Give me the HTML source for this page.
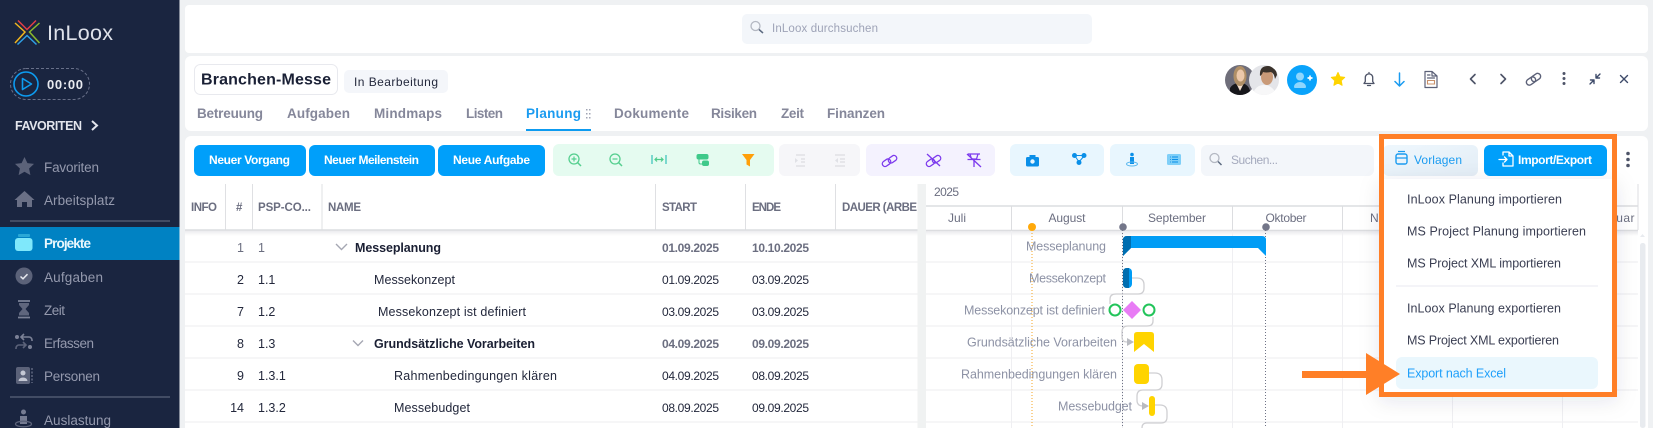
<!DOCTYPE html>
<html lang="de"><head><meta charset="utf-8"><title>InLoox Planung</title>
<style>
html,body{margin:0;padding:0;width:1653px;height:428px;overflow:hidden;background:#eff1f3}
svg{display:block;font-family:"Liberation Sans",sans-serif}
.nav{font-size:13.5px;fill:#9499ad}
.tab{font-size:13.5px;font-weight:700;fill:#85879a}
.btn{font-size:12px;font-weight:700;fill:#fff}
.th{font-size:11.5px;font-weight:700;fill:#6b6e80}
.td{font-size:12.5px;fill:#23283c}
.b{font-size:12.5px;font-weight:700;fill:#1a1f33}
.d{font-size:12px;fill:#23283c}
.db{font-size:12px;font-weight:700;fill:#6b6e80}
.mo{font-size:12px;fill:#6b6e80}
.gl{font-size:12.5px;fill:#8d92a5}
.mi{font-size:12.5px;fill:#3a3e52}
.ln{stroke:#efeff2;stroke-width:1}
.hd{stroke:#dcdde0;stroke-width:1.4}
.c{fill:none;stroke:#cfcfd2;stroke-width:1.3}
.ic{fill:none;stroke-linecap:round;stroke-linejoin:round}
</style></head><body>
<svg width="1653" height="428" viewBox="0 0 1653 428" xmlns="http://www.w3.org/2000/svg">
<defs>
<clipPath id="av1"><circle cx="1240" cy="80" r="15"/></clipPath>
<clipPath id="av2"><circle cx="1264" cy="80" r="15"/></clipPath>
<linearGradient id="hs" x1="0" y1="0" x2="0" y2="1"><stop offset="0" stop-color="#e9e9ec"/><stop offset="1" stop-color="#fff"/></linearGradient>
<linearGradient id="vg" x1="0" y1="0" x2="1" y2="1"><stop offset="0" stop-color="#eef7fd"/><stop offset="1" stop-color="#e3edf6"/></linearGradient>
<filter id="sh" x="-20%" y="-20%" width="140%" height="140%"><feDropShadow dx="0" dy="4" stdDeviation="10" flood-color="#20304a" flood-opacity=".10"/></filter>
</defs>

<!-- sidebar -->
<rect x="0" y="0" width="179.5" height="428" fill="#1a2540"/>
<g fill="none" stroke-width="1.5">
<path d="M18 20.5L27 29.5L36 20.5" stroke="#e23d46"/>
<path d="M15 23L25 32L15 43" stroke="#f0b51e"/>
<path d="M39.5 23L29.5 32L39.5 43" stroke="#8ab92d"/>
<path d="M17.5 44.5L27 35.5L36.5 44.5" stroke="#2e9fe6"/>
</g>
<text x="47" y="40" font-size="21.5" fill="#dfe2ea" textLength="66">InLoox</text>
<rect x="10.5" y="68.5" width="79" height="31" rx="15.5" fill="none" stroke="#687089" stroke-dasharray="3 2"/>
<circle cx="26" cy="84" r="12" fill="none" stroke="#0d9bf0" stroke-width="1.6"/>
<path d="M22.5 78.5L31.5 84L22.5 89.5Z" fill="none" stroke="#0d9bf0" stroke-width="1.6" stroke-linejoin="round"/>
<text x="47" y="89" font-size="13" font-weight="700" fill="#e8eaf0" textLength="36">00:00</text>
<text x="15" y="130" font-size="12.5" font-weight="700" fill="#e3e5ec" textLength="67">FAVORITEN</text>
<path d="M92 121L97 125.500L92 130" fill="none" stroke="#e3e5ec" stroke-width="2"/>
<path d="M24.500 157l2.900 6.100 6.600.8-4.900 4.600 1.300 6.600-5.900-3.300-5.900 3.300 1.300-6.600-4.900-4.600 6.600-.8z" fill="#5b6279"/>
<text class="nav" x="44" y="172" textLength="55">Favoriten</text>
<path d="M14.500 200L24.500 191L34.500 200L32 200V207H27V202H22V207H17V200Z" fill="#6a7086"/>
<text class="nav" x="44" y="205" textLength="71">Arbeitsplatz</text>
<rect x="10" y="220.500" width="160" height="1" fill="#6b7289"/>
<rect x="0" y="227" width="179.500" height="33" fill="#0082c3"/>
<rect x="18" y="234" width="12" height="3" rx="1" fill="#2aa8d6"/>
<rect x="15" y="238" width="17.500" height="13" rx="3" fill="#7fe8fb"/>
<text x="44" y="248" font-size="13.500" font-weight="700" fill="#e9f7fd" textLength="47">Projekte</text>
<circle cx="24" cy="276" r="8.500" fill="#5b6279"/>
<path d="M20.500 276.500l2.500 2.300 4.500-4.600" fill="none" stroke="#e6e8ee" stroke-width="1.500"/>
<text class="nav" x="44" y="282" textLength="59">Aufgaben</text>
<path d="M18 301h12M18 317.500h12" stroke="#7b8196" stroke-width="1.800"/>
<path d="M19 303h10v2l-3.500 4 3.500 4v2.500h-10v-2.500l3.500-4-3.500-4z" fill="#5f667d"/>
<text class="nav" x="44" y="315" textLength="21">Zeit</text>
<circle cx="17" cy="337" r="2" fill="#7b8196"/><circle cx="30" cy="347" r="2" fill="#7b8196"/>
<path d="M32 341v-1a3 3 0 0 0-3-3h-7M24 334l-3 3 3 3" fill="none" stroke="#7b8196" stroke-width="1.600"/>
<path d="M16 349v-1a3 3 0 0 1 3-3h6M23 342l3 3-3 3" fill="none" stroke="#5b6279" stroke-width="1.600"/>
<text class="nav" x="44" y="348" textLength="50">Erfassen</text>
<rect x="16" y="367" width="14" height="17" rx="2" fill="#5b6279"/>
<circle cx="23" cy="373" r="2.500" fill="#c5c8d4"/><path d="M18.500 381a4.500 3.500 0 0 1 9 0z" fill="#c5c8d4"/>
<path d="M32 368v15" stroke="#6b7289" stroke-width="1.300" stroke-dasharray="2 1.500"/>
<text class="nav" x="44" y="381" textLength="56">Personen</text>
<rect x="10" y="396.500" width="160" height="1" fill="#6b7289"/>
<circle cx="23.500" cy="412" r="2.500" fill="#767c92"/>
<path d="M20 416h7v8h-7z" fill="#767c92"/>
<ellipse cx="23.500" cy="424" rx="8" ry="2.800" fill="none" stroke="#5b6279" stroke-width="1.300"/>
<text class="nav" x="44" y="425" textLength="67">Auslastung</text>

<!-- panels -->
<rect x="185" y="5" width="1463" height="48" rx="4" fill="#fff"/>
<rect x="185" y="56" width="1463" height="75" rx="6" fill="#fff"/>
<rect x="185" y="136" width="1463" height="300" rx="6" fill="#fff"/>

<!-- global search -->
<rect x="742" y="14" width="350" height="30" rx="5" fill="#f3f6fa"/>
<circle cx="755.500" cy="26" r="4.500" fill="none" stroke="#b4b8c2" stroke-width="1.300"/>
<path d="M759 29.500l4 3.500" stroke="#5c6a80" stroke-width="1.500"/>
<text x="772" y="32" font-size="11.500" fill="#9ea3b7" textLength="106">InLoox durchsuchen</text>

<!-- title -->
<rect x="194.500" y="64.500" width="143" height="30" rx="6" fill="#fff" stroke="#e8e9ee"/>
<text x="201" y="84.500" font-size="16" font-weight="700" fill="#1a2035" textLength="130">Branchen-Messe</text>
<rect x="344" y="70" width="104" height="23" rx="5" fill="#f4f6fa"/>
<text x="354" y="86" font-size="12" fill="#23283c" textLength="84">In Bearbeitung</text>
<text class="tab" x="197" y="118" textLength="66">Betreuung</text>
<text class="tab" x="287" y="118" textLength="63">Aufgaben</text>
<text class="tab" x="374" y="118" textLength="68">Mindmaps</text>
<text class="tab" x="466" y="118" textLength="37">Listen</text>
<text class="tab" x="526" y="118" textLength="55" style="fill:#1a9bf0">Planung</text>
<g fill="#a0a4b4"><rect x="586" y="109" width="1.500" height="1.500"/><rect x="589" y="109" width="1.500" height="1.500"/><rect x="586" y="113" width="1.500" height="1.500"/><rect x="589" y="113" width="1.500" height="1.500"/><rect x="586" y="117" width="1.500" height="1.500"/><rect x="589" y="117" width="1.500" height="1.500"/></g>
<rect x="526" y="129" width="65" height="2" fill="#0d9bf0"/>
<text class="tab" x="614" y="118" textLength="75">Dokumente</text>
<text class="tab" x="711" y="118" textLength="46">Risiken</text>
<text class="tab" x="781" y="118" textLength="23">Zeit</text>
<text class="tab" x="827" y="118" textLength="58">Finanzen</text>

<!-- header right -->
<g clip-path="url(#av1)">
<rect x="1225" y="65" width="30" height="30" fill="#6f6e7a"/>
<path d="M1230 98v-10q2-4 10-6q7 2 9 6l4 10z" fill="#17171b"/>
<path d="M1236 83l4 8 4-8z" fill="#f0dccb"/>
<ellipse cx="1240" cy="76" rx="6.500" ry="10" fill="#b08f66"/>
<ellipse cx="1240.500" cy="75.500" rx="4" ry="6" fill="#ecc8aa"/>
</g>
<g clip-path="url(#av2)">
<rect x="1249" y="65" width="30" height="30" fill="#e4e5e9"/>
<path d="M1252 96q3-11 12-11q9 0 13 11z" fill="#f7f7f8"/>
<ellipse cx="1267" cy="77" rx="6" ry="8" fill="#c99a78"/>
<path d="M1260 76q-1-10 8-10q8 0 9 9l-2 4q-1-6-4-7q-5 1-8 0q-1 3-3 4z" fill="#3b332c"/>
</g>
<circle cx="1302" cy="80" r="15" fill="#0aa3fb"/>
<circle cx="1300" cy="76.500" r="4" fill="#8ed6fd"/>
<path d="M1294 87a6 5 0 0 1 12 0q0 1-1 1h-10q-1 0-1-1z" fill="#8ed6fd"/>
<path d="M1307.500 78h5M1310 75.500v5" stroke="#fff" stroke-width="1.700"/>
<path d="M1338 72.500l2 4.300 4.700.6-3.500 3.200.9 4.700-4.100-2.300-4.100 2.300.9-4.700-3.500-3.200 4.700-.6z" fill="#ffd400" stroke="#ffd400" stroke-linejoin="round"/>
<path class="ic" d="M1364 83.500h10l-1.300-2v-4a3.700 3.700 0 0 0-7.400 0v4zM1369 72.500v1M1367.500 85.500h3" stroke="#4e5468" stroke-width="1.300"/>
<path class="ic" d="M1399.500 73v12.500M1395 81.500l4.500 4.500 4.500-4.500" stroke="#1a9bf0" stroke-width="1.500"/>
<path class="ic" d="M1425 71.500h7l5 4.500v11.500h-12zM1432 71.500v4.500h5M1427.500 75h2.500M1427.500 78h7" stroke="#5c6178" stroke-width="1.200"/>
<path d="M1427.500 80.500h7v3.500h-7z" fill="none" stroke="#c8906a" stroke-width="1.100"/>
<path class="ic" d="M1475 74.500l-4.500 4.500 4.500 4.500" stroke="#4e5468" stroke-width="1.600"/>
<path class="ic" d="M1501 74.500l4.500 4.500-4.500 4.500" stroke="#4e5468" stroke-width="1.600"/>
<g class="ic" stroke="#5c6178" stroke-width="1.400" fill="none"><rect x="1526" y="78" width="10" height="6" rx="3" transform="rotate(-35 1531 81)"/><rect x="1531" y="74.500" width="10" height="6" rx="3" transform="rotate(-35 1536 77.500)"/></g>
<g fill="#4e5468"><circle cx="1564" cy="73.500" r="1.500"/><circle cx="1564" cy="78.500" r="1.500"/><circle cx="1564" cy="83.500" r="1.500"/></g>
<path class="ic" d="M1590 84l4-4M1590.500 80h3.500v3.500M1600 74l-4 4M1599.500 78h-3.500v-3.500" stroke="#3e4b6a" stroke-width="1.400"/>
<path class="ic" d="M1620.500 75.500l7 7M1627.500 75.500l-7 7" stroke="#3e4b6a" stroke-width="1.400"/>

<!-- toolbar buttons -->
<rect x="194" y="145" width="112" height="31" rx="6" fill="#009ffa"/>
<rect x="309" y="145" width="126" height="31" rx="6" fill="#009ffa"/>
<rect x="438" y="145" width="107" height="31" rx="6" fill="#009ffa"/>
<text class="btn" x="209" y="164" textLength="81">Neuer Vorgang</text>
<text class="btn" x="324" y="164" textLength="95">Neuer Meilenstein</text>
<text class="btn" x="453" y="164" textLength="77">Neue Aufgabe</text>

<rect x="553" y="144" width="221" height="32" rx="6" fill="#e5fbf0"/>
<circle cx="574" cy="159" r="5" fill="none" stroke="#55cf8f" stroke-width="1.300"/>
<path d="M571.500 159h5M574 156.500v5" stroke="#55cf8f" stroke-width="1.200"/>
<path d="M577.500 162.500l3.500 3.500" stroke="#55cf8f" stroke-width="1.500"/>
<circle cx="615" cy="159" r="5" fill="none" stroke="#55cf8f" stroke-width="1.300"/>
<path d="M612.500 159h5" stroke="#55cf8f" stroke-width="1.200"/>
<path d="M618.500 162.500l3.500 3.500" stroke="#55cf8f" stroke-width="1.500"/>
<path d="M652 155v9M666 155v9" stroke="#7bd8cf" stroke-width="2"/>
<path d="M655 159.500h8M657 157.500l-2 2 2 2M661 157.500l2 2-2 2" fill="none" stroke="#4ecb8b" stroke-width="1.200"/>
<rect x="696.500" y="154" width="12" height="5.500" rx="2" fill="#3fc98a"/>
<rect x="702" y="160.500" width="7" height="5.500" rx="2" fill="#3fc98a"/>
<path d="M699 159.500v3a1.500 1.500 0 0 0 1.500 1.500h2" fill="none" stroke="#3fc98a"/>
<path d="M742 154h12.500l-4.500 6v6.500l-3.500-2v-4.500z" fill="#ff9f0a"/>

<rect x="779" y="144" width="81" height="32" rx="6" fill="#f6f6f9"/>
<path d="M796 155h9M801 159h4M801 162h4M796 166h9" stroke="#e0e1e6" stroke-width="1.500"/><path d="M795 158v5l3-2.500z" fill="#e0e1e6"/>
<path d="M835 155h10M840 159h5M840 162h5M835 166h10" stroke="#e0e1e6" stroke-width="1.500"/><path d="M838 158v5l-3-2.500z" fill="#e0e1e6"/>

<rect x="866" y="144" width="129" height="32" rx="6" fill="#f4f2fe"/>
<g fill="none" stroke="#7c3aed" stroke-width="1.300">
<rect x="882" y="160" width="9" height="5.500" rx="2.700" transform="rotate(-35 886.500 162.700)"/>
<rect x="888" y="156.500" width="9" height="5.500" rx="2.700" transform="rotate(-35 892.500 159.200)"/>
<rect x="926" y="160" width="9" height="5.500" rx="2.700" transform="rotate(-35 930.500 162.700)"/>
<rect x="932" y="156.500" width="9" height="5.500" rx="2.700" transform="rotate(-35 936.500 159.200)"/>
<path d="M927 154l13 12"/>
<path d="M968 154h12M970 154l1.500 5h5l1.500-5M967.500 159.500h13M974 160v7M967 154l14 13"/>
</g>

<rect x="1010" y="144" width="94" height="32" rx="6" fill="#e8f6fe"/>
<rect x="1026" y="157" width="13" height="9.500" rx="1.500" fill="#0a8fe8"/><rect x="1029.500" y="155" width="6" height="3" fill="#0a8fe8"/><circle cx="1032.500" cy="161.500" r="2.200" fill="#e8f6fe"/>
<g fill="#0a8fe8"><circle cx="1074.500" cy="155.500" r="2.500"/><circle cx="1084" cy="155.500" r="2.500"/><circle cx="1079" cy="162.500" r="2.500"/></g>
<path d="M1075 155.500h9M1075 156l4 6M1084 156l-5 6" stroke="#0a8fe8"/>
<rect x="1110" y="144" width="85" height="32" rx="6" fill="#e8f6fe"/>
<circle cx="1132" cy="154.500" r="1.800" fill="#0a8fe8"/><path d="M1130 157h4v7h-4z" fill="#0a8fe8"/><ellipse cx="1132" cy="164" rx="5.500" ry="2" fill="none" stroke="#5cb8ee"/>
<rect x="1167" y="154" width="14" height="11" rx="1.500" fill="#7fcff8"/><path d="M1172 157h6M1172 159.500h6M1172 162h6" stroke="#0a8fe8"/><path d="M1170 157h.8M1170 159.500h.8M1170 162h.8" stroke="#0a8fe8"/>
<rect x="1201" y="145" width="173" height="31" rx="6" fill="#f3f6fa"/>
<circle cx="1214.500" cy="158" r="4.500" fill="none" stroke="#b4b8c2" stroke-width="1.300"/><path d="M1218 161.500l3.500 3.500" stroke="#5c6a80" stroke-width="1.500"/>
<text x="1231" y="164" font-size="12" fill="#a5aabd" textLength="47">Suchen...</text>

<!-- table -->
<g stroke="#dfe0e3"><path d="M225.500 184v46M252.500 184v46M322 184v46M655.500 184v46M745.500 184v46M835.500 184v46"/></g>
<rect x="185" y="230" width="733" height="6" fill="url(#hs)"/>
<path class="hd" d="M185 230h733"/>
<text class="th" x="191" y="211" textLength="26">INFO</text>
<text class="th" x="236" y="211" textLength="8">#</text>
<text class="th" x="258" y="211" textLength="53">PSP-CO...</text>
<text class="th" x="328" y="211" textLength="33">NAME</text>
<text class="th" x="662" y="211" textLength="35">START</text>
<text class="th" x="752" y="211" textLength="29">ENDE</text>
<text class="th" x="842" y="211" textLength="75">DAUER (ARBE</text>
<path class="ln" d="M185 262h733M185 294h733M185 326h733M185 358h733M185 390h733M185 422h733" style="stroke:#ececef"/>

<g text-anchor="end" font-size="12.500" fill="#23283c">
<text x="244" y="252" fill="#6b6e80">1</text><text x="244" y="284">2</text><text x="244" y="316">7</text><text x="244" y="348">8</text><text x="244" y="380">9</text><text x="244" y="412">14</text>
</g>
<g font-size="12.500" fill="#23283c">
<text x="258" y="252" fill="#6b6e80">1</text><text x="258" y="284">1.1</text><text x="258" y="316">1.2</text><text x="258" y="348">1.3</text><text x="258" y="380">1.3.1</text><text x="258" y="412">1.3.2</text>
</g>
<path d="M336 244l5.500 5.500 5.500-5.500" fill="none" stroke="#a5a7b3" stroke-width="1.400"/>
<path d="M353 340.500l5 5 5-5" fill="none" stroke="#a5a7b3" stroke-width="1.400"/>
<text class="b" x="355" y="252" textLength="86">Messeplanung</text>
<text class="td" x="374" y="284" textLength="81">Messekonzept</text>
<text class="td" x="378" y="316" textLength="148">Messekonzept ist definiert</text>
<text class="b" x="374" y="348" textLength="161">Grundsätzliche Vorarbeiten</text>
<text class="td" x="394" y="380" textLength="163">Rahmenbedingungen klären</text>
<text class="td" x="394" y="412" textLength="76">Messebudget</text>

<text class="db" x="662" y="252" textLength="57">01.09.2025</text><text class="db" x="752" y="252" textLength="57">10.10.2025</text>
<text class="d" x="662" y="284" textLength="57">01.09.2025</text><text class="d" x="752" y="284" textLength="57">03.09.2025</text>
<text class="d" x="662" y="316" textLength="57">03.09.2025</text><text class="d" x="752" y="316" textLength="57">03.09.2025</text>
<text class="db" x="662" y="348" textLength="57">04.09.2025</text><text class="db" x="752" y="348" textLength="57">09.09.2025</text>
<text class="d" x="662" y="380" textLength="57">04.09.2025</text><text class="d" x="752" y="380" textLength="57">08.09.2025</text>
<text class="d" x="662" y="412" textLength="57">08.09.2025</text><text class="d" x="752" y="412" textLength="57">09.09.2025</text>

<rect x="917.500" y="184" width="8.500" height="244" fill="#f0f2f2"/>

<!-- gantt -->
<text x="934" y="196" font-size="12" fill="#6b6e80" textLength="25">2025</text>
<path class="hd" d="M926 206h712M926 230.500h712"/>
<path d="M1011.500 206v24M1122.500 206v24M1232.500 206v24M1342.500 206v24M1452.500 206v24M1562.500 206v24M1638 184v46" stroke="#dcdde0"/>
<rect x="926" y="231" width="712" height="5" fill="url(#hs)"/>
<path class="ln" d="M926 262h712M926 294h712M926 326h712M926 358h712M926 390h712M926 422h712" style="stroke:#ececef"/>
<path class="ln" d="M1011.500 231v197M1122.500 231v197M1232.500 231v197M1342.500 231v197M1452.500 231v197M1562.500 231v197"/>
<text class="mo" x="957" y="222" text-anchor="middle" textLength="18">Juli</text>
<text class="mo" x="1067" y="222" text-anchor="middle" textLength="37">August</text>
<text class="mo" x="1177" y="222" text-anchor="middle" textLength="58">September</text>
<text class="mo" x="1286" y="222" text-anchor="middle" textLength="41">Oktober</text>
<text class="mo" x="1397" y="222" text-anchor="middle" textLength="54">November</text>
<text class="mo" x="1615" y="222" text-anchor="middle" textLength="39">Januar</text>

<path d="M1032 227v201" stroke="#f5a623" stroke-width="1" stroke-dasharray="1 2"/>
<path d="M1122.500 227v201M1265.500 227v201" stroke="#6f7386" stroke-width="1" stroke-dasharray="1 2"/>
<circle cx="1032" cy="227" r="4" fill="#ffa90a"/>
<circle cx="1123" cy="227" r="3.800" fill="#737689"/>
<circle cx="1266" cy="227" r="3.800" fill="#737689"/>

<g text-anchor="end">
<text class="gl" x="1106" y="250.500" textLength="80">Messeplanung</text>
<text class="gl" x="1106" y="282.500" textLength="77">Messekonzept</text>
<text class="gl" x="1105" y="314.500" textLength="141">Messekonzept ist definiert</text>
<text class="gl" x="1117" y="346.500" textLength="150">Grundsätzliche Vorarbeiten</text>
<text class="gl" x="1117" y="378.500" textLength="156">Rahmenbedingungen klären</text>
<text class="gl" x="1132" y="410.500" textLength="74">Messebudget</text>
</g>

<!-- connectors -->
<path class="c" d="M1132 278h5q7 0 7 7v3q0 6-6 6h-22q-6 0-6 5v5"/>
<path class="c" d="M1153 317v4q0 5-6 5h-19q-6 0-6 6v5q0 5 5 5h2"/>
<path d="M1127 338l7 4-7 4z" fill="#b9bbc1"/>
<path class="c" d="M1149 373h6q7 0 7 7v4q0 6-6 6h-13q-6 0-6 6v4q0 6 6 6h1"/>
<path d="M1142 402l7 4-7 4z" fill="#b9bbc1"/>
<path class="c" d="M1155 405h5q7 0 7 7v5q0 6-6 6h-14q-5 0-5 5"/>

<!-- bars -->
<path d="M1127 236H1262q4 0 4 4V256L1258 248H1131L1123 256V240q0-4 4-4z" fill="#009cf5"/>
<path d="M1127 236H1131V248L1123 256V240q0-4 4-4z" fill="#006eb0"/>
<rect x="1123" y="268" width="9" height="20" rx="4" fill="#009cf5"/>
<path d="M1127 268h2v20h-2q-4 0-4-4v-12q0-4 4-4z" fill="#006eb0"/>
<circle cx="1115" cy="310" r="5.500" fill="#fff" stroke="#22c45a" stroke-width="2"/>
<path d="M1132 301l9 9-9 9-9-9z" fill="#e87cf5"/>
<circle cx="1149" cy="310" r="5.500" fill="#fff" stroke="#22c45a" stroke-width="2"/>
<path d="M1137 332H1151q3 0 3 3V352L1144 344L1134 352V335q0-3 3-3z" fill="#ffd400"/>
<rect x="1134" y="364" width="15" height="20" rx="4" fill="#ffd400"/>
<rect x="1149" y="396" width="6" height="20" rx="3" fill="#ffd400"/>

<!-- scrollbar -->
<rect x="1640" y="243" width="5.500" height="185" rx="2.500" fill="#e8ebef"/>
<path d="M1640 237l2.500-3 2.500 3z" fill="#e8ebef"/>

<!-- toolbar right -->
<rect x="1383" y="145" width="95" height="31" rx="6" fill="url(#vg)"/>
<rect x="1396" y="154" width="11" height="10" rx="2" fill="none" stroke="#1a9bf0" stroke-width="1.400"/>
<path d="M1396 158h11M1398 151.500h7" stroke="#1a9bf0" stroke-width="1.300"/>
<text x="1414" y="164" font-size="12" fill="#1a9bf0" textLength="48">Vorlagen</text>
<rect x="1484" y="145" width="123" height="31" rx="6" fill="#009ffa"/>
<path class="ic" d="M1503 155v-3h6l4 4v10h-10v-3M1509 152v4h4M1499 159.500h8M1504.500 157l2.500 2.500-2.500 2.500" stroke="#fff" stroke-width="1.300"/>
<text class="btn" x="1518" y="164" textLength="74">Import/Export</text>
<g fill="#4e5468"><circle cx="1628" cy="153.500" r="1.800"/><circle cx="1628" cy="159.500" r="1.800"/><circle cx="1628" cy="165.500" r="1.800"/></g>

<!-- dropdown -->
<rect x="1379" y="179" width="238" height="218" fill="#fff" filter="url(#sh)"/>
<rect x="1396" y="357" width="202" height="32" rx="6" fill="#eaf7fd"/>
<text class="mi" x="1407" y="203.500" textLength="155">InLoox Planung importieren</text>
<text class="mi" x="1407" y="235.500" textLength="179">MS Project Planung importieren</text>
<text class="mi" x="1407" y="267.500" textLength="154">MS Project XML importieren</text>
<rect x="1396" y="285.500" width="202" height="1" fill="#e9e9f0"/>
<text class="mi" x="1407" y="312.500" textLength="154">InLoox Planung exportieren</text>
<text class="mi" x="1407" y="344.500" textLength="152">MS Project XML exportieren</text>
<text class="mi" x="1407" y="377.500" textLength="99" style="fill:#1e9ffa">Export nach Excel</text>

<!-- annotation -->
<rect x="1381.500" y="136.500" width="233" height="258" fill="none" stroke="#ff7f27" stroke-width="5"/>
<rect x="1302" y="371" width="66" height="7" fill="#ff7f27"/>
<path d="M1366 353L1400 374L1366 395Z" fill="#ff7f27"/>
</svg>
</body></html>
